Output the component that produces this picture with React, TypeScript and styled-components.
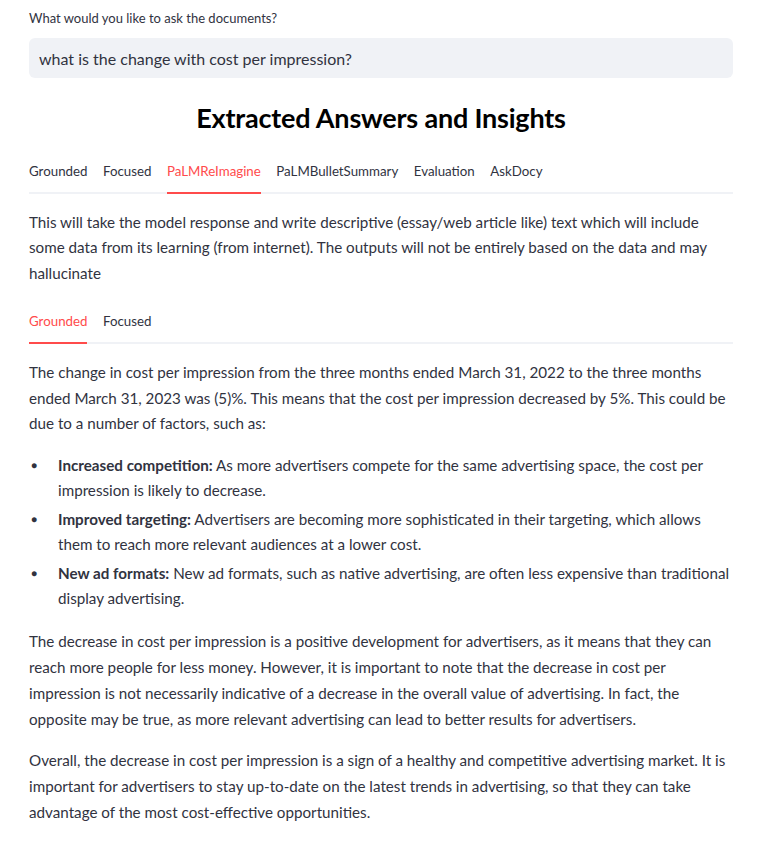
import React, { useState } from "react";
import styled, { createGlobalStyle } from "styled-components";

const Global = createGlobalStyle`
  html, body { margin: 0; padding: 0; background: #ffffff; }
  body { font-family: "Lato", "Noto Sans", sans-serif; color: rgb(49, 51, 63); -webkit-font-smoothing: antialiased; }
  * { box-sizing: border-box; }
`;

const Main = styled.main`
  width: 704px;
  margin-left: 29px;
  padding-top: 9px;
  display: flex;
  flex-direction: column;
`;

const Label = styled.label`
  font-size: 13px;
  line-height: 18px;
  color: rgb(49, 51, 63);
  margin-bottom: 11px;
`;

const Input = styled.input`
  height: 40px;
  width: 100%;
  border: none;
  border-radius: 6px;
  background: rgb(240, 242, 246);
  padding: 0 10px;
  font-family: inherit;
  font-size: 16px;
  color: rgb(49, 51, 63);
  outline: none;
`;

const Title = styled.h2`
  margin: 20px 0 0;
  text-align: center;
  font-size: 27px;
  line-height: 40px;
  font-weight: 700;
  color: rgb(0, 0, 0);
  letter-spacing: -0.2px;
`;

const TabBar = styled.div<{ $top: number }>`
  display: flex;
  gap: 15.5px;
  margin-top: ${(p) => p.$top}px;
  border-bottom: 2px solid rgb(240, 242, 246);
`;

const Tab = styled.button<{ $active: boolean }>`
  border: none;
  background: none;
  padding: 0 0 11px;
  margin-bottom: -2px;
  font-family: inherit;
  font-size: 13.3px;
  line-height: 20px;
  cursor: pointer;
  color: ${(p) => (p.$active ? "rgb(255, 75, 75)" : "rgb(49, 51, 63)")};
  border-bottom: 2px solid ${(p) => (p.$active ? "rgb(255, 75, 75)" : "transparent")};
`;

const Para = styled.p<{ $top: number; $lh?: number }>`
  margin: ${(p) => p.$top}px 0 0;
  font-size: 15.2px;
  line-height: ${(p) => p.$lh ?? 25.4}px;
`;

const List = styled.ul`
  margin: 17px 0 0;
  padding: 0;
  list-style: none;
  display: flex;
  flex-direction: column;
  gap: 4px;
  font-size: 15.2px;
  line-height: 25px;
`;

const Item = styled.li`
  display: grid;
  grid-template-columns: 29px 1fr;
`;

const Bullet = styled.span`
  font-size: 10px;
  padding-left: 2px;
`;

const topTabs = ["Grounded", "Focused", "PaLMReImagine", "PaLMBulletSummary", "Evaluation", "AskDocy"];
const innerTabs = ["Grounded", "Focused"];

export default function App() {
  const [top, setTop] = useState(2);
  const [inner, setInner] = useState(0);
  return (
    <>
      <Global />
      <Main>
        <Label>What would you like to ask the documents?</Label>
        <Input defaultValue="what is the change with cost per impression?" />
        <Title>Extracted Answers and Insights</Title>
        <TabBar $top={23}>
          {topTabs.map((t, i) => (
            <Tab key={t} $active={i === top} onClick={() => setTop(i)}>
              {t}
            </Tab>
          ))}
        </TabBar>
        <Para $top={16}>
          This will take the model response and write descriptive (essay/web article like) text which will include
          <br />
          some data from its learning (from internet). The outputs will not be entirely based on the data and may
          <br />
          hallucinate
        </Para>
        <TabBar $top={25}>
          {innerTabs.map((t, i) => (
            <Tab key={t} $active={i === inner} onClick={() => setInner(i)}>
              {t}
            </Tab>
          ))}
        </TabBar>
        <Para $top={16}>
          The change in cost per impression from the three months ended March 31, 2022 to the three months
          <br />
          ended March 31, 2023 was (5)%. This means that the cost per impression decreased by 5%. This could be
          <br />
          due to a number of factors, such as:
        </Para>
        <List>
          <Item>
            <Bullet>●</Bullet>
            <span>
              <b>Increased competition:</b> As more advertisers compete for the same advertising space, the cost per
              <br />
              impression is likely to decrease.
            </span>
          </Item>
          <Item>
            <Bullet>●</Bullet>
            <span>
              <b>Improved targeting:</b> Advertisers are becoming more sophisticated in their targeting, which allows
              <br />
              them to reach more relevant audiences at a lower cost.
            </span>
          </Item>
          <Item>
            <Bullet>●</Bullet>
            <span>
              <b>New ad formats:</b> New ad formats, such as native advertising, are often less expensive than
              traditional
              <br />
              display advertising.
            </span>
          </Item>
        </List>
        <Para $top={18} $lh={25.7}>
          The decrease in cost per impression is a positive development for advertisers, as it means that they can
          <br />
          reach more people for less money. However, it is important to note that the decrease in cost per
          <br />
          impression is not necessarily indicative of a decrease in the overall value of advertising. In fact, the
          <br />
          opposite may be true, as more relevant advertising can lead to better results for advertisers.
        </Para>
        <Para $top={16} $lh={25.7}>
          Overall, the decrease in cost per impression is a sign of a healthy and competitive advertising market. It is
          <br />
          important for advertisers to stay up-to-date on the latest trends in advertising, so that they can take
          <br />
          advantage of the most cost-effective opportunities.
        </Para>
      </Main>
    </>
  );
}
